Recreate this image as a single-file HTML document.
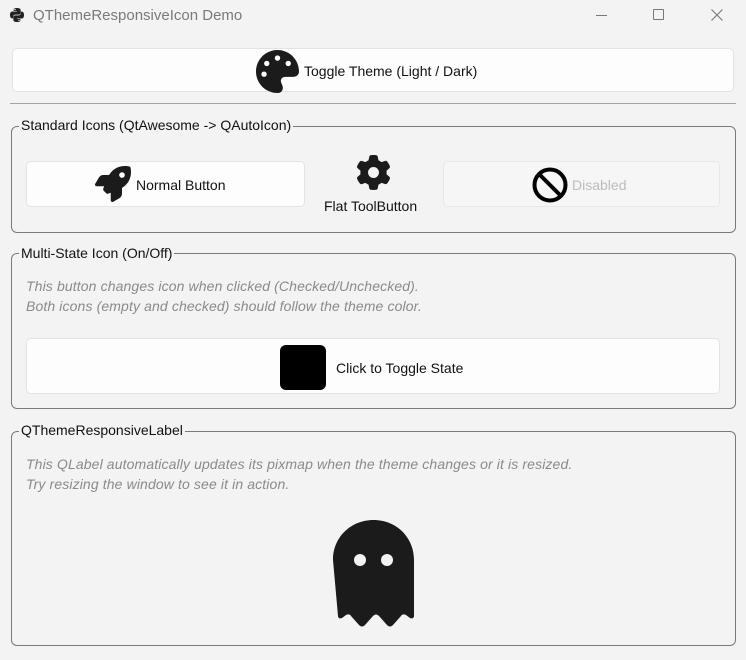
<!DOCTYPE html>
<html><head><meta charset="utf-8"><style>
*{box-sizing:border-box;margin:0;padding:0}
body{width:746px;height:660px;background:#f3f3f3;font-family:"Liberation Sans",sans-serif;font-size:14px;color:#111;position:relative;overflow:hidden}
.a{position:absolute}
.btn{position:absolute;background:#fdfdfd;border:1px solid #e3e3e3;border-radius:5px}
.grp{position:absolute;border:1px solid #7a7a7a;border-radius:6px}
.gt{position:absolute;background:#f3f3f3;padding:0 2px;line-height:16px;font-size:14px}
.it{position:absolute;font-style:italic;color:#8a8a8a;font-size:14px;line-height:20px;letter-spacing:0.12px}
</style></head><body>
<svg class="a" style="left:9px;top:7px" width="16" height="16" viewBox="0 0 16 16"><path d="M7.8 1C4.5 1 4.7 2.4 4.7 2.4V4h3.2v.5H3.4S1 4.2 1 7.9s2.1 3.5 2.1 3.5h1.2V9.7s-.1-2.1 2.1-2.1h3.2s2 0 2-2V2.9S11.9 1 7.8 1z" fill="#222"/><path d="M8.2 15c3.3 0 3.1-1.4 3.1-1.4V12H8.1v-.5h4.5S15 11.8 15 8.1s-2.1-3.5-2.1-3.5h-1.2v1.7s.1 2.1-2.1 2.1H6.4s-2 0-2 2v2.7S4.1 15 8.2 15z" fill="#222"/><circle cx="6" cy="2.6" r=".7" fill="#f3f3f3"/><circle cx="10" cy="13.4" r=".7" fill="#f3f3f3"/></svg>
<div class="a" style="left:33px;top:7px;color:#7a7a7a;font-size:15px;line-height:18px">QThemeResponsiveIcon Demo</div>
<div class="a" style="left:596px;top:15px;width:11px;height:1px;background:#777"></div>
<div class="a" style="left:653px;top:9px;width:11px;height:11px;border:1px solid #777;border-radius:1px"></div>
<svg class="a" style="left:711px;top:9px" width="12" height="12"><path d="M0.5 0.5L11.5 11.5M11.5 0.5L0.5 11.5" stroke="#777" stroke-width="1.1"/></svg>

<div class="btn" style="left:12px;top:48px;width:722px;height:44px"></div>
<svg class="a" style="left:256px;top:50px" width="43" height="43" viewBox="0 0 512 512"><path fill="#1b1b1b" d="M512 256c0 .9 0 1.8 0 2.7-.4 36.5-33.6 61.3-70.1 61.3H344c-26.5 0-48 21.5-48 48 0 3.4.4 6.7 1 9.900 2.1 10.2 6.5 20 10.8 29.9 6.1 13.8 12.1 27.5 12.1 42 0 31.8-21.6 60.7-53.4 62-3.5.1-7 .2-10.6.2C114.6 512 0 397.4 0 256S114.6 0 256 0 512 114.6 512 256zM128 288a32 32 0 1 0-64 0 32 32 0 1 0 64 0zm0-96a32 32 0 1 0 0-64 32 32 0 1 0 0 64zM288 96a32 32 0 1 0-64 0 32 32 0 1 0 64 0zm96 96a32 32 0 1 0 0-64 32 32 0 1 0 0 64z"/></svg>
<div class="a" style="left:304px;top:63px;line-height:16px">Toggle Theme (Light / Dark)</div>
<div class="a" style="left:10px;top:103px;width:726px;height:1px;background:#a5a5a5"></div>

<div class="grp" style="left:11px;top:126px;width:725px;height:107px"></div>
<div class="gt" style="left:19px;top:117px">Standard Icons (QtAwesome -&gt; QAutoIcon)</div>
<div class="btn" style="left:26px;top:161px;width:279px;height:46px"></div>
<svg class="a" style="left:95px;top:166px" width="36" height="36" viewBox="0 0 512 512"><path fill="#1b1b1b" d="M156.6 384.9L125.7 354c-8.5-8.5-11.5-20.8-7.7-32.2 3-8.9 7-20.5 11.8-33.8H24c-8.6 0-16.6-4.6-20.9-12.1s-4.2-16.7.2-24.1l52.5-88.5c13-21.9 36.5-35.3 61.9-35.3h82.3c2.4-4 4.8-7.7 7.2-11.3C289.1-4.1 411.1-8.1 483.9 5.3c11.6 2.1 20.6 11.2 22.8 22.8 13.4 72.9 9.3 194.8-111.4 276.7-3.5 2.4-7.3 4.8-11.300 7.2v82.3c0 25.4-13.4 49-35.3 61.9l-88.5 52.5c-7.4 4.4-16.6 4.5-24.1.2s-12.1-12.2-12.1-20.9V380.8c-14.1 4.9-26.4 8.9-35.7 11.9-11.2 3.6-23.4.5-31.8-7.8zM384 168a40 40 0 1 0 0-80 40 40 0 1 0 0 80z"/></svg>
<div class="a" style="left:136px;top:177px;line-height:16px">Normal Button</div>
<svg class="a" style="left:356px;top:155px" width="35" height="35" viewBox="0 0 512 512"><path fill="#1b1b1b" d="M495.9 166.6c3.2 8.7.5 18.4-6.4 24.6l-43.3 39.4c1.1 8.3 1.7 16.8 1.7 25.4s-.6 17.1-1.7 25.4l43.3 39.4c6.9 6.2 9.6 15.9 6.4 24.6-4.4 11.9-9.7 23.3-15.8 34.3l-4.7 8.1c-6.6 11-14 21.4-22.1 31.2-5.9 7.2-15.7 9.6-24.5 6.8l-55.7-17.7c-13.4 10.3-28.2 18.9-44 25.4l-12.5 57.1c-2 9.1-9 16.3-18.2 17.8-13.8 2.3-28 3.5-42.5 3.5s-28.7-1.2-42.5-3.5c-9.2-1.5-16.2-8.7-18.2-17.8l-12.5-57.1c-15.8-6.5-30.6-15.1-44-25.4L83.1 425.9c-8.8 2.8-18.6.3-24.5-6.8-8.1-9.8-15.5-20.2-22.1-31.2l-4.7-8.1c-6.1-11-11.4-22.4-15.8-34.3-3.2-8.7-.5-18.4 6.4-24.6l43.3-39.4C64.6 273.1 64 264.6 64 256s.6-17.1 1.7-25.4L22.4 191.2c-6.9-6.2-9.6-15.9-6.4-24.6 4.4-11.9 9.7-23.3 15.8-34.3l4.7-8.1c6.6-11 14-21.4 22.1-31.2 5.9-7.2 15.7-9.6 24.5-6.8l55.7 17.7c13.4-10.3 28.2-18.9 44-25.4l12.5-57.1c2-9.1 9-16.3 18.2-17.8C227.3 1.2 241.5 0 256 0s28.7 1.2 42.5 3.5c9.2 1.5 16.2 8.7 18.2 17.8l12.5 57.1c15.8 6.5 30.6 15.1 44 25.4l55.7-17.7c8.8-2.8 18.6-.3 24.5 6.8 8.1 9.8 15.5 20.2 22.1 31.2l4.7 8.1c6.1 11 11.4 22.4 15.8 34.3zM256 336a80 80 0 1 0 0-160 80 80 0 1 0 0 160z"/></svg>
<div class="a" style="left:324px;top:198px;line-height:16px">Flat ToolButton</div>
<div class="btn" style="left:443px;top:161px;width:277px;height:46px;background:#f6f6f6;border-color:#e8e8e8"></div>
<svg class="a" style="left:532px;top:167px" width="36" height="36" viewBox="0 0 36 36"><circle cx="18" cy="18" r="15.5" fill="none" stroke="#000" stroke-width="4"/><path d="M7 7L29 29" stroke="#000" stroke-width="4"/></svg>
<div class="a" style="left:572px;top:177px;line-height:16px;color:#bcbcbc">Disabled</div>

<div class="grp" style="left:11px;top:253px;width:725px;height:156px"></div>
<div class="gt" style="left:19px;top:245px">Multi-State Icon (On/Off)</div>
<div class="it" style="left:26px;top:276px">This button changes icon when clicked (Checked/Unchecked).<br>Both icons (empty and checked) should follow the theme color.</div>
<div class="btn" style="left:26px;top:338px;width:694px;height:56px"></div>
<div class="a" style="left:280px;top:345px;width:46px;height:45px;background:#000;border-radius:6px"></div>
<div class="a" style="left:336px;top:360px;line-height:16px">Click to Toggle State</div>

<div class="grp" style="left:11px;top:431px;width:725px;height:215px"></div>
<div class="gt" style="left:19px;top:422px">QThemeResponsiveLabel</div>
<div class="it" style="left:26px;top:454px">This QLabel automatically updates its pixmap when the theme changes or it is resized.<br>Try resizing the window to see it in action.</div>
<svg class="a" style="left:333px;top:520px" width="81" height="109" viewBox="0 0 81 109"><path fill="#1b1b1b" d="M0 40C0 17 18 0 40.5 0S81 17 81 40V96c0 2-2 3-4 2l-4-3c-2-1-4-1-5 1l-8 9c-2 2-4 2-6 0l-8-9c-2-2-4-2-6 0l-8 9c-2 2-4 2-6 0l-8-9c-1-2-3-2-5-1l-4 3c-2 1-4 0-4-2z"/><circle cx="27" cy="40" r="6" fill="#f3f3f3"/><circle cx="54" cy="40" r="6" fill="#f3f3f3"/></svg>
</body></html>
